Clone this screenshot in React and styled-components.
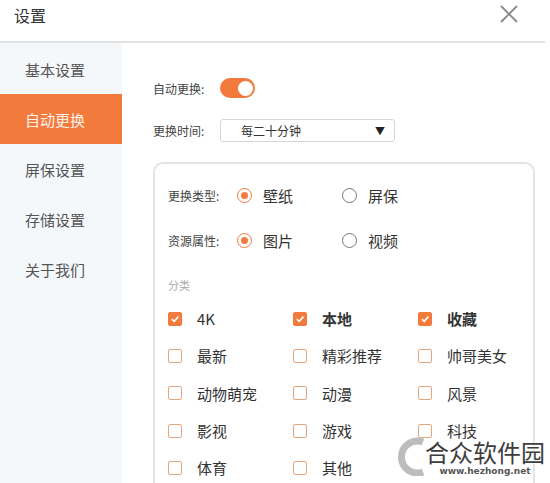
import styled, { createGlobalStyle } from "styled-components";

const GlobalStyle = createGlobalStyle`
  html, body { margin: 0; padding: 0; background: #fff; }
  body { font-family: "Noto Sans CJK SC", "Noto Sans", sans-serif; }
`;

const ORANGE = "#f37a3d";

const Window = styled.div`
  position: relative;
  width: 550px;
  height: 483px;
  overflow: hidden;
  background: #fff;
  display: flex;
  flex-direction: column;
`;

const Header = styled.div`
  height: 41px;
  margin-right: 5px;
  border-bottom: 2px solid #e2e2e2;
  display: flex;
  align-items: center;
  justify-content: space-between;
  padding-left: 14px;
  padding-right: 27px;
  flex-shrink: 0;
`;

const Title = styled.div`
  font-size: 16px;
  color: #333;
  margin-top: -12px;
`;

const Close = styled.svg`
  width: 18px;
  height: 18px;
  margin-top: -14px;
`;

const Body = styled.div`
  flex: 1;
  display: flex;
  min-height: 0;
`;

const Sidebar = styled.div`
  width: 122px;
  background: #f5f8fb;
  padding-top: 1px;
  flex-shrink: 0;
`;

const NavItem = styled.div`
  height: 50px;
  display: flex;
  align-items: center;
  padding-left: 25px;
  font-size: 15px;
  color: ${(p) => (p.active ? "#fff2e8" : "#555")};
  background: ${(p) => (p.active ? ORANGE : "transparent")};
`;

const Content = styled.div`
  flex: 1;
  min-width: 0;
  padding: 30px 15px 0 31px;
  display: flex;
  flex-direction: column;
`;

const Row = styled.div`
  display: flex;
  align-items: center;
  height: 30px;
  flex-shrink: 0;
  margin-bottom: ${(p) => p.gap || 0}px;
`;

const Label = styled.div`
  width: ${(p) => p.w || 67}px;
  font-size: 12px;
  color: #444;
  flex-shrink: 0;
`;

const Toggle = styled.div`
  width: 35px;
  height: 20px;
  border-radius: 10px;
  background: ${ORANGE};
  display: flex;
  align-items: center;
  justify-content: flex-end;
  padding-right: 2px;
  box-sizing: border-box;
`;

const Knob = styled.div`
  width: 15px;
  height: 15px;
  border-radius: 50%;
  background: #fff;
`;

const Select = styled.div`
  width: 175px;
  height: 23px;
  box-sizing: border-box;
  border: 1px solid #d6d6d6;
  border-radius: 3px;
  display: flex;
  align-items: center;
  justify-content: space-between;
  padding: 0 9px 0 20px;
  font-size: 12px;
  color: #333;
`;

const Arrow = styled.span`
  font-size: 10px;
  color: #222;
`;

const Panel = styled.div`
  margin-top: 17px;
  flex: 1 0 auto;
  border: 2px solid #e4e4e4;
  border-bottom: none;
  border-radius: 10px 10px 0 0;
  padding: 16px 0 0 13px;
  display: flex;
  flex-direction: column;
`;

const Option = styled.div`
  width: 105px;
  display: flex;
  align-items: center;
  gap: 11px;
  font-size: 15px;
  color: #333;
`;

const Radio = styled.span`
  width: 15px;
  height: 15px;
  box-sizing: border-box;
  border-radius: 50%;
  border: 1.5px solid ${(p) => (p.checked ? ORANGE : "#777")};
  display: flex;
  align-items: center;
  justify-content: center;
  &::after {
    content: "";
    width: 7px;
    height: 7px;
    border-radius: 50%;
    background: ${(p) => (p.checked ? ORANGE : "transparent")};
  }
`;

const SectionTitle = styled.div`
  font-size: 11px;
  color: #aaa;
  height: 30px;
  flex-shrink: 0;
  display: flex;
  align-items: center;
`;

const Grid = styled.div`
  display: grid;
  flex-shrink: 0;
  grid-template-columns: 125px 125px 1fr;
  grid-auto-rows: 37.3px;
`;

const CheckItem = styled.div`
  display: flex;
  align-items: center;
  gap: 15px;
  font-size: 15px;
  color: #333;
  font-weight: ${(p) => (p.bold ? 700 : 400)};
`;

const Box = styled.span`
  width: 14px;
  height: 14px;
  box-sizing: border-box;
  border-radius: 2px;
  border: 1.5px solid ${(p) => (p.checked ? ORANGE : "#e2a780")};
  background: ${(p) => (p.checked ? ORANGE : "#fff")};
  display: flex;
  align-items: center;
  justify-content: center;
  flex-shrink: 0;
`;

const Watermark = styled.div`
  position: absolute;
  right: 5px;
  bottom: 7px;
  display: flex;
  align-items: flex-end;
  pointer-events: none;
`;

const WmText = styled.div`
  display: flex;
  flex-direction: column;
  align-items: center;
  margin-left: -4px;
`;

const WmName = styled.div`
  font-size: 24px;
  line-height: 26px;
  color: #3d3d3d;
  text-shadow: 0 0 2px #fff, 0 0 2px #fff;
`;

const WmUrl = styled.div`
  font-family: "DejaVu Sans", sans-serif;
  font-size: 9px;
  font-weight: 700;
  color: #555;
  margin-top: 1px;
`;

const nav = ["基本设置", "自动更换", "屏保设置", "存储设置", "关于我们"];

const categories = [
  ["4K", true, false],
  ["本地", true, true],
  ["收藏", true, true],
  ["最新"],
  ["精彩推荐"],
  ["帅哥美女"],
  ["动物萌宠"],
  ["动漫"],
  ["风景"],
  ["影视"],
  ["游戏"],
  ["科技"],
  ["体育"],
  ["其他"],
];

const Check = () => (
  <svg width="10" height="10" viewBox="0 0 10 10">
    <path d="M1.8 5.2 L4.2 7.4 L8.4 2.6" fill="none" stroke="#fff" strokeWidth="1.6" />
  </svg>
);

export default function App() {
  return (
    <Window>
      <GlobalStyle />
      <Header>
        <Title>设置</Title>
        <Close viewBox="0 0 18 18">
          <path d="M1 1 L17 17 M17 1 L1 17" stroke="#888" strokeWidth="1.8" />
        </Close>
      </Header>
      <Body>
        <Sidebar>
          {nav.map((n, i) => (
            <NavItem key={n} active={i === 1}>
              {n}
            </NavItem>
          ))}
        </Sidebar>
        <Content>
          <Row gap={12}>
            <Label>自动更换:</Label>
            <Toggle>
              <Knob />
            </Toggle>
          </Row>
          <Row>
            <Label>更换时间:</Label>
            <Select>
              <span>每二十分钟</span>
              <Arrow>▼</Arrow>
            </Select>
          </Row>
          <Panel>
            <Row gap={15}>
              <Label w={69}>更换类型:</Label>
              <Option>
                <Radio checked />
                壁纸
              </Option>
              <Option>
                <Radio />
                屏保
              </Option>
            </Row>
            <Row gap={15}>
              <Label w={69}>资源属性:</Label>
              <Option>
                <Radio checked />
                图片
              </Option>
              <Option>
                <Radio />
                视频
              </Option>
            </Row>
            <SectionTitle>分类</SectionTitle>
            <Grid>
              {categories.map(([name, checked, bold]) => (
                <CheckItem key={name} bold={bold}>
                  <Box checked={checked}>{checked && <Check />}</Box>
                  {name}
                </CheckItem>
              ))}
            </Grid>
          </Panel>
        </Content>
      </Body>
      <Watermark>
        <svg width="32" height="40" viewBox="0 0 32 40">
          <path d="M26 6 A16 16 0 1 0 26 36" fill="none" stroke="#bdbdbd" strokeWidth="7" />
        </svg>
        <WmText>
          <WmName>合众软件园</WmName>
          <WmUrl>www.hezhong.net</WmUrl>
        </WmText>
      </Watermark>
    </Window>
  );
}
